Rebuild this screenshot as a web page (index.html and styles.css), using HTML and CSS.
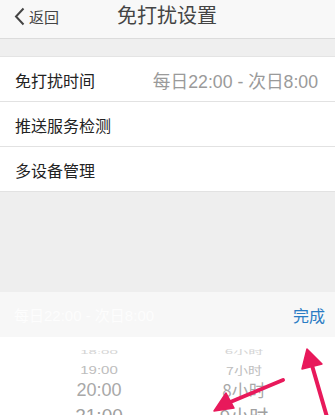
FILE: index.html
```html
<!DOCTYPE html>
<html lang="zh">
<head>
<meta charset="utf-8">
<link rel="stylesheet" href="styles.css">
</head>
<body>
<div class="screen">
  <header class="nav">
    <div class="back">
      <svg class="chev" width="11" height="19" viewBox="0 0 11 19"><polyline points="9.5,1.5 2,9.5 9.5,17.5" fill="none" stroke="#444" stroke-width="2"/></svg>
      <span>返回</span>
    </div>
    <div class="title">免打扰设置</div>
  </header>
  <div class="gap"></div>
  <ul class="list">
    <li class="row"><span>免打扰时间</span><span class="value">每日22:00 - 次日8:00</span></li>
    <li class="row"><span>推送服务检测</span></li>
    <li class="row"><span>多设备管理</span></li>
  </ul>
  <div class="mask"></div>
  <div class="toolbar">
    <span class="tb-text">每日22:00 - 次日8:00</span>
    <span class="done">完成</span>
  </div>
  <div class="picker">
    <div class="col col-left">
      <div class="it it0">18:00</div>
      <div class="it it1">19:00</div>
      <div class="it it2">20:00</div>
      <div class="it it3">21:00</div>
    </div>
    <div class="col col-right">
      <div class="it it0">6小时</div>
      <div class="it it1">7小时</div>
      <div class="it it2">8小时</div>
      <div class="it it3">9小时</div>
    </div>
  </div>
  <svg class="arrows" width="335" height="415" viewBox="0 0 335 415">
    <g fill="#e8195b" stroke="#e8195b" stroke-linejoin="round">
      <line x1="283" y1="380" x2="228" y2="403" stroke-width="4" stroke-linecap="round"/>
      <polygon points="214,411 226,393 234,408" stroke-width="1.5"/>
      <line x1="327" y1="417" x2="311" y2="362" stroke-width="4" stroke-linecap="round"/>
      <polygon points="307,349 302,369 322,364" stroke-width="1.5"/>
    </g>
  </svg>
</div>
</body>
</html>
```
FILE: styles.css
```css
* { box-sizing: border-box; margin: 0; padding: 0; }
html, body { width: 335px; height: 415px; overflow: hidden; }
body {
  font-family: "Noto Sans CJK SC", "Liberation Sans", sans-serif;
  background: #efefef;
}
.screen { position: relative; width: 335px; height: 415px; display: flex; flex-direction: column; overflow: hidden; }
.screen > * { flex-shrink: 0; }
.nav {
  height: 39px;
  background: #f8f8f8;
  border-bottom: 1px solid #dcdcdc;
  display: flex;
  align-items: center;
  position: relative;
}
.back {
  display: flex;
  align-items: center;
  padding-left: 14px;
  color: #444;
  font-size: 15px;
  gap: 4px;
  height: 100%;
  padding-bottom: 6px;
}
.chev { display: block; }
.title {
  position: absolute;
  left: 117px;
  top: 0;
  height: 32px;
  line-height: 30px;
  font-size: 20px;
  color: #444;
}
.gap { height: 17px; background: #efefef; }
.list { list-style: none; background: #fff; border-top: 1px solid #e4e4e4; }
.row {
  height: 45px;
  border-bottom: 1px solid #e2e2e2;
  display: flex;
  align-items: center;
  justify-content: space-between;
  padding: 2px 17px 0 15px;
  font-size: 16px;
  color: #222;
}
.value { color: #9a9a9a; font-size: 17.7px; font-family: "Liberation Sans", "Noto Sans CJK SC", sans-serif; }
.mask { height: 100px; background: #eeeeee; }
.toolbar {
  height: 45px;
  background: #f7f7f7;
  display: flex;
  align-items: center;
  justify-content: space-between;
  padding: 0 10px 0 14px;
}
.tb-text { color: #fdfdfd; font-size: 15px; font-family: "Liberation Sans", "Noto Sans CJK SC", sans-serif; }
.done { color: #2a7cc4; font-size: 16px; }
.picker {
  flex: 1 1 auto;
  min-height: 0;
  overflow: hidden;
  background: #fff;
  display: grid;
  grid-template-columns: 198px 92px 1fr;
  padding-top: 9px;
}
.col { display: flex; flex-direction: column; align-items: center; }
.it { font-family: "Liberation Sans", "Noto Sans CJK SC", sans-serif; color: #aaa; flex-shrink: 0; }
.it0 { font-size: 15px; height: 12px; line-height: 12px; transform: scaleY(0.4); color: #d4d4d4; margin-bottom: 4px; }
.it1 { font-size: 15px; height: 16px; line-height: 16px; transform: scaleY(0.78); color: #bdbdbd; margin-bottom: 2px; }
.it2 { font-size: 18px; height: 20px; line-height: 20px; color: #a8a8a8; margin-bottom: 6px; }
.it3 { font-size: 19px; height: 20px; line-height: 20px; color: #a0a0a0; }
.col-right .it { font-family: "Noto Sans CJK SC", sans-serif; }
.col-right .it2 { font-size: 17px; }
.col-right .it1 { font-size: 14px; }
.arrows { position: absolute; left: 0; top: 0; pointer-events: none; }
```
